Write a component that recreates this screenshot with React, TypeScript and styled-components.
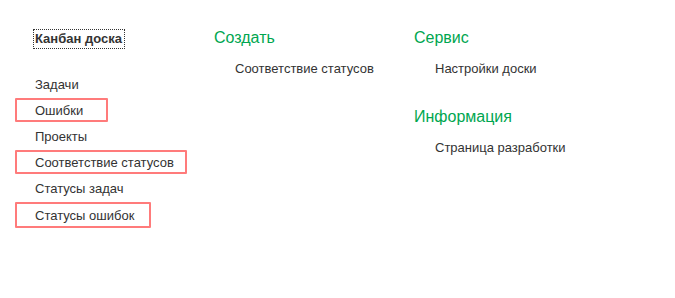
import React from "react";
import styled, { createGlobalStyle } from "styled-components";

const Global = createGlobalStyle`
  html, body { margin: 0; padding: 0; background: #fff; }
  body { font-family: "Liberation Sans", Arial, sans-serif; color: #333; }
`;

const Page = styled.div`
  display: flex;
  align-items: flex-start;
  padding: 29px 0 0 15px;
  width: 675px;
  height: 298px;
  box-sizing: border-box;
`;

const Column = styled.div<{ $w: number }>`
  display: flex;
  flex-direction: column;
  align-items: flex-start;
  width: ${(p) => p.$w}px;
  flex: none;
`;

const Title = styled.div`
  margin-left: 18px;
  padding: 0 2px 0 1px;
  border: 1px dotted #333;
  font-size: 13px;
  font-weight: bold;
  line-height: 18px;
  color: #333;
`;

const NavList = styled.div`
  display: flex;
  flex-direction: column;
  gap: 2px;
  margin-top: 23px;
`;

const NavItem = styled.div<{ $hl?: boolean; $w?: number; $h?: number }>`
  display: flex;
  align-items: center;
  box-sizing: border-box;
  height: ${(p) => p.$h ?? 24}px;
  width: ${(p) => (p.$w ? `${p.$w}px` : "auto")};
  padding-left: 18px;
  border: 2px solid ${(p) => (p.$hl ? "#ff7b7b" : "transparent")};
  border-radius: 1px;
  font-size: 13px;
  color: #333;
`;

const Header = styled.div<{ $top?: number }>`
  font-size: 16px;
  line-height: 18px;
  color: #00a650;
  margin-top: ${(p) => p.$top ?? 0}px;
`;

const Link = styled.div`
  margin: 12px 0 0 21px;
  font-size: 13px;
  line-height: 20px;
  color: #333;
`;

const items: { t: string; hl?: boolean; w?: number; h?: number }[] = [
  { t: "Задачи" },
  { t: "Ошибки", hl: true, w: 93 },
  { t: "Проекты" },
  { t: "Соответствие статусов", hl: true, w: 172 },
  { t: "Статусы задач" },
  { t: "Статусы ошибок", hl: true, w: 136, h: 26 },
];

export default function App() {
  return (
    <>
      <Global />
      <Page>
        <Column $w={199}>
          <Title>Канбан доска</Title>
          <NavList>
            {items.map((i) => (
              <NavItem key={i.t} $hl={i.hl} $w={i.w} $h={i.h}>
                {i.t}
              </NavItem>
            ))}
          </NavList>
        </Column>
        <Column $w={200}>
          <Header>Создать</Header>
          <Link>Соответствие статусов</Link>
        </Column>
        <Column $w={200}>
          <Header>Сервис</Header>
          <Link>Настройки доски</Link>
          <Header $top={29}>Информация</Header>
          <Link>Страница разработки</Link>
        </Column>
      </Page>
    </>
  );
}
